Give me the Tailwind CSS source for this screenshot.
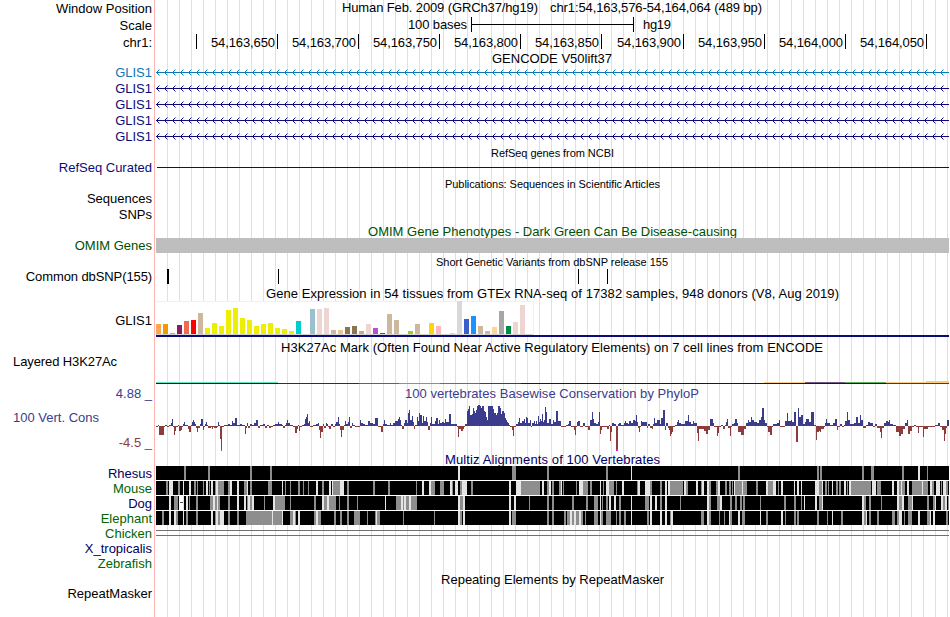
<!DOCTYPE html>
<html lang="en">
<head>
    <meta charset="UTF-8">
    <meta name="viewport" content="width=device-width, initial-scale=1.0">
    <title>chr1:54,163,576-54,164,064</title>
    <script src="https://cdn.jsdelivr.net/npm/@tailwindcss/browser@4"></script>
</head>
<body class="bg-white">
    <main class="relative w-[950px] h-[617px] overflow-hidden bg-white text-[13px] text-black font-['Liberation_Sans',Arial,sans-serif]">

        <!-- guide lines behind the tracks -->
        <div class="absolute inset-y-0 left-[167px] w-[781px] bg-[linear-gradient(to_right,#dcdcff_1px,transparent_1px)] bg-[size:12px_100%]"></div>

        <div class="relative flex h-full">
            <!-- labels -->
            <aside class="flex flex-col w-[155px] h-full shrink-0 border-r border-[#ffb4b4] pt-px pr-[2px] text-right whitespace-nowrap leading-[13px]">
                <div class="h-[17px] leading-[15px]">Window Position</div>
                <div class="h-[17px] leading-[15px]">Scale</div>
                <div class="h-[30px] leading-[15px]">chr1:</div>
                <div class="h-4 leading-4 text-[#0c78b4]">GLIS1</div>
                <div class="h-4 leading-4 text-[#0c0c78]">GLIS1</div>
                <div class="h-4 leading-4 text-[#0c0c78]">GLIS1</div>
                <div class="h-4 leading-4 text-[#0c0c78]">GLIS1</div>
                <div class="h-4 leading-4 text-[#0c0c78]">GLIS1</div>
                <div class="h-[46px] pt-4 text-[#0c0c78]">RefSeq Curated</div>
                <div class="h-4 leading-4">Sequences</div>
                <div class="h-4 leading-4">SNPs</div>
                <div class="h-[47px] pt-4 text-[#005000]">OMIM Genes</div>
                <div class="h-[44px] tracking-[-0.1px]">Common dbSNP(155)</div>
                <div class="h-[41px]">GLIS1</div>
                <div class="h-[32px] pl-[13px] text-left tracking-[-0.1px]">Layered H3K27Ac</div>
                <div class="h-[24px] text-[#3c3c8c]">4.88 _</div>
                <div class="h-[25px] pl-[13px] text-left text-[#3c3c8c]">100 Vert. Cons</div>
                <div class="h-[31px] text-[#8c3c3c]">-4.5 _</div>
                <div class="h-[15px] text-[#000064]">Rhesus</div>
                <div class="h-[15px] text-[#006400]">Mouse</div>
                <div class="h-[15px] text-[#000064]">Dog</div>
                <div class="h-[15px] text-[#006400]">Elephant</div>
                <div class="h-[15px] text-[#006400]">Chicken</div>
                <div class="h-[15px] text-[#000064]">X_tropicalis</div>
                <div class="h-[30px] text-[#006400]">Zebrafish</div>
                <div class="h-[15px]">RepeatMasker</div>
            </aside>

            <!-- tracks, one svg each; the viewBox keeps page coordinates -->
            <section class="flex flex-col w-[794px] shrink-0 *:block *:shrink-0 *:overflow-visible">
                <svg class="h-[17px]" viewBox="155 0 794 17">
                    <text x="342" y="12" textLength="196">Human Feb. 2009 (GRCh37/hg19)</text>
                    <text x="550" y="12" textLength="212">chr1:54,163,576-54,164,064 (489 bp)</text>
                </svg>
                <svg class="h-[17px]" viewBox="155 17 794 17">
                    <text x="408" y="29" textLength="59">100 bases</text>
                    <path d="M471 17h1v15h-1zM633 17h1v15h-1zM471 24h163v1h-163z"/>
                    <text x="643" y="29" textLength="28">hg19</text>
                </svg>
                <svg id="ruler" class="h-[17px]" viewBox="155 34 794 17"></svg>
                <svg class="h-[13px]" viewBox="155 51 794 13">
                    <text x="492" y="63" textLength="120">GENCODE V50lift37</text>
                </svg>
                <svg id="genes" class="h-[80px]" viewBox="155 64 794 80"></svg>
                <svg class="h-[31px]" viewBox="155 144 794 31">
                    <text class="text-[11px]" x="491" y="157" textLength="123">RefSeq genes from NCBI</text>
                    <path d="M157 167h792v1h-792z" fill="#0c0c78"/>
                </svg>
                <svg class="h-[47px]" viewBox="155 175 794 47">
                    <text class="text-[11px]" x="445" y="188" textLength="215">Publications: Sequences in Scientific Articles</text>
                </svg>
                <svg class="h-[31px]" viewBox="155 222 794 31">
                    <text x="368" y="236" textLength="369" fill="#005000">OMIM Gene Phenotypes - Dark Green Can Be Disease-causing</text>
                    <path d="M156 238h793v15h-793z" fill="#bebebe"/>
                </svg>
                <svg class="h-[31px]" viewBox="155 253 794 31">
                    <text class="text-[11px]" x="436" y="266" textLength="232">Short Genetic Variants from dbSNP release 155</text>
                    <path d="M167 269h2v15h-2zM278 269h1v15h-1zM578 269h1v15h-1zM607 269h1v15h-1z"/>
                </svg>
                <svg id="gtex" class="h-[53px]" viewBox="155 284 794 53">
                    <text x="266" y="298" textLength="573">Gene Expression in 54 tissues from GTEx RNA-seq of 17382 samples, 948 donors (V8, Aug 2019)</text>
                    <path d="M156 301h378v34h-378z" fill="#f0f0f0"/>
                    <path d="M156 302h377v32h-377z" fill="#fff"/>
                    <path d="M156 334h377v1h-377z" fill="#d3d3d3"/>
                    <path d="M156 335h793v2h-793z" fill="#0c0c78"/>
                </svg>
                <svg class="h-[47px]" viewBox="155 337 794 47">
                    <text x="281" y="352" textLength="542">H3K27Ac Mark (Often Found Near Active Regulatory Elements) on 7 cell lines from ENCODE</text>
                    <path d="M156 382h122v1h-122z" fill="#5fe6c0"/>
                    <path d="M156 383h793v1h-793z" fill="#1c1430"/>
                    <path d="M278 383h81v1h-81z" fill="#2c2c50"/>
                    <path d="M359 383h40v1h-40z" fill="#6c6058"/>
                    <path d="M399 383h41v1h-41z" fill="#ee6868"/>
                    <path d="M440 383h40v1h-40z" fill="#2f8f60"/>
                    <path d="M480 383h41v1h-41z" fill="#2c4a50"/>
                    <path d="M521 383h41v1h-41z" fill="#10184c"/>
                    <path d="M764 382h41v1h-41zM886 382h40v1h-40z" fill="#f8cc88"/>
                    <path d="M805 382h40v1h-40z" fill="#705a80"/>
                    <path d="M845 382h41v1h-41z" fill="#60b060"/>
                    <path d="M926 381h23v2h-23z" fill="#fccc78"/>
                    <path d="M886 383h63v1h-63z" fill="#204a50"/>
                </svg>
                <svg id="phylop" class="h-[68px]" viewBox="155 384 794 68">
                    <text x="405" y="398" textLength="294" fill="#3c3c8c">100 vertebrates Basewise Conservation by PhyloP</text>
                </svg>
                <svg id="multiz" class="h-[119px]" viewBox="155 452 794 119">
                    <text x="445" y="464" textLength="215" fill="#000064">Multiz Alignments of 100 Vertebrates</text>
                    <path d="M156 530h793v1h-793zM156 535h793v1h-793z" fill="#707070"/>
                </svg>
                <svg class="h-[46px]" viewBox="155 571 794 46">
                    <text x="441" y="584" textLength="223">Repeating Elements by RepeatMasker</text>
                </svg>
            </section>
        </div>
    </main>

    <script>
        const box = (x, y, w, h) => `M${x} ${y}h${w}v${h}h${-w}z`;
        const draw = (id, d, fill) => {
            document.getElementById(id).insertAdjacentHTML('beforeend', `<path d="${d}" fill="${fill}"/>`);
        };

        // ruler
        const ticks = [196, 277, 358, 439, 520, 601, 683, 764, 845, 926];
        const coords = ['', '54,163,650', '54,163,700', '54,163,750', '54,163,800', '54,163,850', '54,163,900', '54,163,950', '54,164,000', '54,164,050'];
        draw('ruler', ticks.map(x => box(x, 34, 1, 15)).join(''), '#000');
        ticks.forEach((x, i) => {
            if (coords[i]) document.getElementById('ruler').insertAdjacentHTML('beforeend', `<text x="${x - 66}" y="47" textLength="64">${coords[i]}</text>`);
        });

        // introns with strand arrows
        [72, 88, 104, 120, 136].forEach((y, i) => {
            const color = i ? '#0c0c78' : '#0c78b4';
            let d = box(156, y, 793, 1);
            let ends = '';
            for (let x = 157; x < 946; x += 8) {
                d += box(x, y - 1, 1, 3) + box(x + 1, y - 2, 1, 1) + box(x + 1, y + 2, 1, 1);
                ends += box(x + 2, y - 3, 1, 1) + box(x + 2, y + 3, 1, 1);
            }
            draw('genes', d, color);
            draw('genes', ends, i ? '#8686bb' : '#86bbda');
        });

        // GTEx bars: one per tissue, 7px apart
        const tissues = [
            ['#ffa54f', 10], ['#ee9a00', 10], ['#8fbc8f', 1], ['#8b1c62', 9], ['#ee6a50', 13], ['#ff0000', 14], ['#cdb79e', 21],
            ['#eeee00', 6], ['#eeee00', 11], ['#eeee00', 8], ['#eeee00', 24], ['#eeee00', 26], ['#eeee00', 16], ['#eeee00', 14],
            ['#eeee00', 8], ['#eeee00', 10], ['#eeee00', 11], ['#eeee00', 6], ['#eeee00', 5], ['#eeee00', 3], ['#00cdcd', 13],
            ['#ee82ee', 0], ['#9ac0cd', 25], ['#eed5d2', 25], ['#eed5d2', 26], ['#cdb79e', 4], ['#eec591', 4], ['#8b7355', 7],
            ['#8b7355', 8], ['#cdaa7d', 3], ['#eed5d2', 10], ['#b452cd', 6], ['#7a378b', 1], ['#cdb79e', 20], ['#cdb79e', 14],
            ['#cdb79e', 0], ['#9acd32', 3], ['#cdb79e', 10], ['#7a67ee', 0], ['#ffd700', 11], ['#ffb6c1', 8], ['#cd9b1d', 0],
            ['#b4eeb4', 1], ['#d9d9d9', 33], ['#3a5fcd', 15], ['#1e90ff', 18], ['#cdb79e', 8], ['#cdb79e', 3], ['#ffd39b', 7],
            ['#a6a6a6', 23], ['#008b45', 8], ['#eed5d2', 12], ['#eed5d2', 29], ['#ff00ff', 0]
        ];
        tissues.forEach(([color, h], i) => draw('gtex', box(156 + i * 7, 334 - h, 5, h), color));

        // PhyloP steps, x:score, each held until the next x
        const scores = `156:-1 158:1 159:-9 164:-1 165:1 167:-1 169:1 171:3 172:7 173:-1 174:-9 175:-5 176:-1 178:1 179:-5 181:-4 182:-1 183:2 184:4 185:1
            188:-3 189:-6 191:1 192:4 193:6 194:4 195:2 196:-2 197:-6 198:-2 200:2 201:7 203:-4 204:-1 205:2 206:4 207:1 208:-2 211:-1 212:-3 213:-1 214:-2 217:-1
            218:4 219:1 220:-13 221:-24 222:-1 224:1 228:2 230:1 232:5 233:3 235:8 237:1 240:2 242:1 245:-8 246:-2 247:3 248:-2 250:2 252:1 254:3 256:6 258:-2
            260:1 263:2 265:-2 267:1 269:-2 271:-1 273:1 275:2 278:4 279:2 282:1 283:-2 285:1 286:3 287:6 288:3 290:1 293:-1 295:-7 297:-3 298:1 299:-5 300:-1
            302:1 304:2 305:7 306:9 307:12 308:3 309:5 310:-1 313:1 316:2 318:3 319:-4 320:-12 321:-6 323:2 324:-2 326:3 327:2 328:-1 329:-3 331:2 333:-1
            335:2 336:4 338:9 339:2 340:-4 341:-11 342:-4 344:1 345:5 346:2 348:4 349:9 350:-2 352:3 353:1 355:-1 360:6 361:3 363:2 365:1 368:5 370:3 373:2 375:8
            378:-1 381:-6 383:2 384:6 385:2 387:1 390:3 391:1 393:3 395:5 398:7 399:9 400:6 401:1 402:-3 404:3 405:6 407:3 408:13 409:16 410:6 412:10 413:4 414:-3
            415:1 417:9 418:5 419:13 420:11 422:3 423:10 424:5 426:9 427:4 428:-4 430:3 431:9 432:2 435:5 436:8 438:2 439:6 440:3 442:4 444:3 445:7 446:4 449:12
            451:2 457:-1 458:-11 459:-3 461:-5 463:-3 464:-1 465:2 467:15 468:17 469:20 470:11 472:12 473:18 474:15 475:13 476:16 477:20 478:21 480:20 481:18 482:20 484:15
            485:14 486:9 487:6 488:20 493:17 494:13 496:11 497:13 498:20 500:18 501:12 502:15 504:13 505:8 506:6 507:4 508:3 509:1 510:-1 512:-4 513:-10 514:-1 516:2 518:4 519:8
            520:3 522:5 524:7 525:3 526:9 527:8 528:3 530:6 531:-1 532:3 534:5 535:2 536:5 537:2 538:10 539:4 540:7 541:5 542:12 543:4 544:6 545:19 546:14 547:3 549:7 551:2 553:6 554:4
            556:15 558:5 561:-1 566:1 568:2 569:5 571:-1 574:-4 575:-9 576:-1 577:4 578:5 580:-1 583:3 585:-1 588:-4 590:6 592:14 593:7 594:3 596:2 598:4 599:14
            600:-8 601:-4 602:-1 607:-3 609:1 610:-15 611:-6 612:3 614:2 616:-24 618:2 619:3 621:1 624:3 625:5 626:3 628:2 629:5
            631:3 633:6 635:5 636:11 637:4 638:-2 639:-6 640:-1 641:5 642:4 647:-2 648:2 650:-2 652:-3 653:2 654:8 655:3 657:6 660:2 661:8 663:16 665:-4 666:3
            668:-2 669:-4 670:-10 671:-8 672:-6 673:-1 675:1 677:4 678:6 679:3 681:2 685:5 687:5 688:11 689:4 691:2 693:5 694:3 697:-7 698:-15 699:-3 704:-5 706:-8
            708:-4 710:7 713:3 714:-1 717:-10 718:-7 719:-1 721:1 723:-3 725:1 726:4 727:7 728:-2 730:-10 731:-1 732:2 734:3 735:7 737:3 738:-6 741:-9 744:-3 746:3 748:6
            749:4 751:9 752:6 754:4 757:3 759:6 761:9 762:18 764:6 765:3 767:-1 768:-6 770:-9 772:-1 773:2 777:3 779:6 780:-1 785:5 787:13 788:5 791:6 792:4 794:14 796:-16
            798:18 799:9 801:11 803:2 805:4 806:7 809:4 811:14 814:1 816:-14 817:-6 819:-5 820:-6 821:-3 824:-1 825:3 826:7 827:3 830:1 833:3 835:7 837:-4 838:-1 840:2
            842:-1 844:1 845:5 847:14 848:6 850:2 854:3 856:9 858:3 860:11 861:6 863:-2 866:1 868:4 870:3 873:-1 875:2 877:-2 880:-6 881:-12 882:-2 884:3 886:5 888:4 889:6
            890:2 893:1 896:-6 899:-10 901:-8 903:-3 905:3 907:6 908:-8 910:-5 912:-1 914:1 916:-1 918:-7 919:-1 923:-11 924:-3 928:-1 935:1 938:3 940:-1 942:-4 944:-15 945:-8 946:-2 947:6 949:0`;
        const steps = scores.trim().split(/\s+/).map(s => s.split(':').map(Number));
        let up = '', down = '';
        for (let i = 0; i < steps.length - 1; i++) {
            const [x, v] = steps[i];
            const w = steps[i + 1][0] - x;
            if (v > 0) up += box(x, 426 - v, w, v);
            else down += box(x, 426, w, -v);
        }
        draw('phylop', up, '#3c3c8c');
        draw('phylop', down, '#8c3c3c');
        draw('phylop', box(221, 449, 1, 2) + box(616, 449, 2, 2), '#ff00ff');

        // alignments: x:width of weak (gray) and unaligned (light) columns over black
        const species = [
            ['184:2 208:2 250:2 270:2 512:4 547:2 606:2 738:2 817:2 820:2 862:2 871:3 902:2 927:1', '458:2 631:1 918:2'],
            ['166:2 178:2 194:2 197:1 203:1 209:1 215:1 218:6 228:2 244:2 246:1 250:2 268:4 285:1 290:1 298:2 303:1 308:1 322:2 333:7 347:2 373:2 388:2 416:1 431:4 440:4 452:1 460:2 471:2 521:19 547:2 552:2 559:2 563:1 576:1 583:5 590:2 603:1 609:5 616:1 637:1 650:2 660:2 670:13 686:2 701:1 709:2 716:2 725:2 729:2 732:1 735:7 743:4 756:2 768:5 778:1 819:3 825:2 828:1 836:2 839:2 847:1 851:20 877:4 899:2 902:3 912:10 923:5 932:2 941:1 946:2',
             '169:4 183:1 189:2 206:2 211:2 216:2 230:2 237:2 247:1 282:1 316:2 329:2 332:1 340:4 422:2 429:2 450:2 455:3 462:5 509:2 516:5 542:2 549:2 561:1 579:4 600:1 606:3 622:2 638:2 645:5 665:2 668:2 684:2 696:2 702:2 707:2 718:2 734:1 742:1 766:2 773:3 781:2 794:1 797:2 801:1 815:4 822:1 832:1 844:2 849:2 872:4 892:2 897:2 901:1 907:2 922:1 930:2 936:4 943:3'],
            ['174:4 189:1 196:2 210:3 215:2 218:2 228:2 247:1 250:2 264:1 275:10 290:1 314:2 324:3 329:7 339:1 347:2 357:1 396:5 403:1 406:3 411:6 460:3 529:1 547:2 552:2 572:2 586:2 594:4 602:1 606:2 619:2 645:4 660:2 680:1 709:2 717:3 730:2 735:2 740:2 743:2 760:1 784:2 794:2 801:1 819:3 864:2 869:2 881:1 899:3 908:4 927:2 933:2 943:2 948:1',
             '169:2 183:1 186:2 213:2 217:1 237:2 244:2 248:2 252:2 273:2 322:2 327:2 385:1 401:2 404:2 409:2 458:2 463:2 509:2 514:2 600:1 609:2 614:2 631:1 650:2 655:2 665:2 707:2 720:2 804:1 815:2 822:1 862:2 897:2 902:2 912:1 935:1 941:2 945:2'],
            ['162:2 176:2 186:2 196:2 215:1 218:2 228:2 237:2 246:26 273:9 290:3 295:1 314:2 318:3 334:2 340:2 347:2 354:6 367:1 375:1 377:3 403:1 434:1 460:2 512:4 547:2 552:2 564:2 567:3 572:2 576:3 581:2 585:1 594:4 601:2 606:5 616:1 619:2 624:2 647:2 670:1 701:3 709:2 719:1 724:1 730:2 742:3 766:2 785:1 794:2 797:2 817:2 827:1 841:2 864:2 869:2 877:2 892:3 897:2 904:1 908:4 927:3 946:2',
             '169:2 174:2 183:1 211:2 216:2 220:4 272:1 282:1 293:2 298:2 316:2 376:1 458:2 463:2 509:2 570:2 574:2 579:2 600:1 631:1 650:2 660:2 665:2 671:2 707:2 729:1 738:2 760:1 781:2 832:1 862:2 866:1 899:3 918:2 930:1 933:2']
        ];
        const cols = (list, y) => list.split(' ').map(s => {
            const [x, w] = s.split(':').map(Number);
            return box(x, y, w, 14);
        }).join('');
        species.forEach(([gray, light], i) => {
            const y = 466 + i * 15;
            if (i) draw('multiz', box(156, y - 1, 793, 1), '#fff');
            draw('multiz', box(156, y, 793, 14), '#000');
            draw('multiz', cols(gray, y), '#8e8e8e');
            draw('multiz', cols(light, y), '#e4e4e4');
        });
        // gap in the dog row
        draw('multiz', box(179, 496, 4, 14), '#fff');
        draw('multiz', box(180, 502, 3, 1), '#555');
    </script>
</body>
</html>
